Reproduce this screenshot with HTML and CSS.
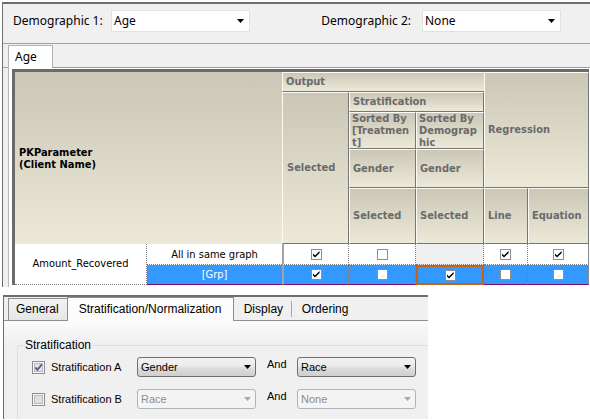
FILE: index.html
```html
<!DOCTYPE html>
<html>
<head>
<meta charset="utf-8">
<link rel="stylesheet" href="styles.css">
</head>
<body>
<div class="frame">
  <div class="toolbar">
    <span class="lbl lbl1">Demographic 1:</span>
    <div class="combo flat"><span class="ctext">Age</span><svg class="arrow" width="7" height="4" viewBox="0 0 7 4"><path d="M0 0H7L3.5 4Z" fill="#000"/></svg></div>
    <span class="lbl lbl2">Demographic 2:</span>
    <div class="combo flat"><span class="ctext">None</span><svg class="arrow" width="7" height="4" viewBox="0 0 7 4"><path d="M0 0H7L3.5 4Z" fill="#000"/></svg></div>
  </div>
  <div class="tabstrip"><div class="tab">Age</div></div>
  <div class="tabpage">
    <div class="grid">
      <div class="h pk">PKParameter<br>(Client Name)</div>
      <div class="h out">Output</div>
      <div class="h sel3">Selected</div>
      <div class="h strat">Stratification</div>
      <div class="h sort4">Sorted By<br>[Treatmen<br>t]</div>
      <div class="h sort5">Sorted By<br>Demograp<br>hic</div>
      <div class="h gen4">Gender</div>
      <div class="h gen5">Gender</div>
      <div class="h reg">Regression</div>
      <div class="h s4">Selected</div>
      <div class="h s5">Selected</div>
      <div class="h line">Line</div>
      <div class="h eq">Equation</div>

      <div class="d amount">Amount_Recovered</div>
      <div class="d r1 c2">All in same graph</div>
      <div class="d r1 c3"><svg class="cb" width="11" height="11" viewBox="0 0 11 11"><rect x=".5" y=".5" width="10" height="10" fill="#fff" stroke="#8e8e8e"/><path d="M2 4.6 4 6.6 8.6 2V4L4 8.6 2 6.6Z" fill="#000"/></svg></div>
      <div class="d r1"><svg class="cb" width="11" height="11" viewBox="0 0 11 11"><rect x=".5" y=".5" width="10" height="10" fill="#fff" stroke="#8e8e8e"/></svg></div>
      <div class="d r1 blank"></div>
      <div class="d r1"><svg class="cb" width="11" height="11" viewBox="0 0 11 11"><rect x=".5" y=".5" width="10" height="10" fill="#fff" stroke="#8e8e8e"/><path d="M2 4.6 4 6.6 8.6 2V4L4 8.6 2 6.6Z" fill="#000"/></svg></div>
      <div class="d r1 last"><svg class="cb" width="11" height="11" viewBox="0 0 11 11"><rect x=".5" y=".5" width="10" height="10" fill="#fff" stroke="#8e8e8e"/><path d="M2 4.6 4 6.6 8.6 2V4L4 8.6 2 6.6Z" fill="#000"/></svg></div>

      <div class="d r2 c2">[Grp]</div>
      <div class="d r2 c3"><svg class="cb" width="11" height="11" viewBox="0 0 11 11"><rect x=".5" y=".5" width="10" height="10" fill="#fff" stroke="#8e8e8e"/><path d="M2 4.6 4 6.6 8.6 2V4L4 8.6 2 6.6Z" fill="#000"/></svg></div>
      <div class="d r2"><svg class="cb" width="11" height="11" viewBox="0 0 11 11"><rect x=".5" y=".5" width="10" height="10" fill="#fff" stroke="#8e8e8e"/></svg></div>
      <div class="d r2 focus"><svg class="cb" width="11" height="11" viewBox="0 0 11 11"><rect x=".5" y=".5" width="10" height="10" fill="#fff" stroke="#8e8e8e"/><path d="M2 4.6 4 6.6 8.6 2V4L4 8.6 2 6.6Z" fill="#000"/></svg></div>
      <div class="d r2"><svg class="cb" width="11" height="11" viewBox="0 0 11 11"><rect x=".5" y=".5" width="10" height="10" fill="#fff" stroke="#8e8e8e"/></svg></div>
      <div class="d r2 last"><svg class="cb" width="11" height="11" viewBox="0 0 11 11"><rect x=".5" y=".5" width="10" height="10" fill="#fff" stroke="#8e8e8e"/></svg></div>
    </div>
  </div>
</div>

<div class="panel">
  <div class="ptabs">
    <div class="ptab boxed">General</div>
    <div class="ptab boxed active">Stratification/Normalization</div>
    <div class="ptab plain sep">Display</div>
    <div class="ptab plain">Ordering</div>
  </div>
  <div class="pbody">
    <fieldset class="group">
      <legend>Stratification</legend>
      <div class="srow">
        <svg class="wcb" width="13" height="13" viewBox="0 0 13 13"><rect x=".5" y=".5" width="12" height="12" fill="#f6f6f6" stroke="#8f8f8f"/><rect x="2.5" y="2.5" width="8" height="8" fill="#e2e4e8" stroke="#b9bcc2"/><path d="M3.4 6.4 5.4 8.8 9.8 3.4" fill="none" stroke="#4a5d8c" stroke-width="1.7"/></svg>
        <span class="slabel">Stratification A</span>
        <div class="combo win"><span class="ctext">Gender</span><svg class="arrow" width="7" height="4" viewBox="0 0 7 4"><path d="M0 0H7L3.5 4Z" fill="#000"/></svg></div>
        <span class="and">And</span>
        <div class="combo win"><span class="ctext">Race</span><svg class="arrow" width="7" height="4" viewBox="0 0 7 4"><path d="M0 0H7L3.5 4Z" fill="#000"/></svg></div>
      </div>
      <div class="srow">
        <svg class="wcb" width="13" height="13" viewBox="0 0 13 13"><rect x=".5" y=".5" width="12" height="12" fill="#f6f6f6" stroke="#8f8f8f"/><rect x="2.5" y="2.5" width="8" height="8" fill="#dfe0e2" stroke="#b9bcc2"/></svg>
        <span class="slabel">Stratification B</span>
        <div class="combo win disabled"><span class="ctext">Race</span><svg class="arrow" width="7" height="4" viewBox="0 0 7 4"><path d="M0 0H7L3.5 4Z" fill="#a8a8a8"/></svg></div>
        <span class="and">And</span>
        <div class="combo win disabled"><span class="ctext">None</span><svg class="arrow" width="7" height="4" viewBox="0 0 7 4"><path d="M0 0H7L3.5 4Z" fill="#a8a8a8"/></svg></div>
      </div>
    </fieldset>
  </div>
</div>
</body>
</html>
```

FILE: styles.css
```css
html, body {
  margin: 0;
  padding: 0;
}
body {
  width: 590px;
  height: 420px;
  overflow: hidden;
  background: #fff;
  font-family: "Noto Sans", "Liberation Sans", sans-serif;
  font-size: 12px;
  color: #000;
}

/* ---------- top frame ---------- */
.frame {
  margin: 2px 0 0 2px;
  border-top: 2px solid #6f6f6f;
  border-left: 1px solid #6f6f6f;
  background: #f0f0f0;
}
.toolbar {
  box-sizing: border-box;
  height: 40px;
  padding-top: 6px;
  border-bottom: 1px solid #a0a0a0;
  display: flex;
  align-items: flex-start;
}
.lbl {
  box-sizing: border-box;
  line-height: 22px;
  white-space: nowrap;
}
.lbl1 {
  width: 108px;
  padding-left: 10px;
}
.lbl2 {
  width: 172px;
  padding-right: 11px;
  text-align: right;
}
.combo {
  box-sizing: border-box;
  display: flex;
  align-items: center;
  justify-content: space-between;
}
.combo.flat {
  width: 139px;
  height: 22px;
  background: #fff;
  border: 1px solid #e1e1e1;
  padding: 0 5px 0 2px;
}
.combo.flat .ctext {
  line-height: 20px;
}
.tabstrip {
  height: 23px;
  border-bottom: 1px solid #a0a0a0;
  display: flex;
  align-items: flex-start;
}
.tab {
  box-sizing: border-box;
  margin: 1px 0 0 5px;
  width: 45px;
  height: 23px;
  padding-left: 6px;
  line-height: 21px;
  background: #fff;
  border: 1px solid #b2b2b2;
  border-bottom: none;
}
.tabpage {
  margin-left: 5px;
  border-left: 1px solid #b8b8b8;
  background: #fff;
  padding: 1px 0 2px 3px;
}

/* ---------- data grid ---------- */
.grid {
  display: grid;
  width: max-content;
  grid-template-columns: 132px 135px 67px 67px 68px 44px 61px;
  grid-template-rows: 20px 20px 37px 39px 56px 21px 20px;
  border-top: 3px solid #6b6b6b;
  border-left: 3px solid #6b6b6b;
  font-family: "DejaVu Sans Condensed", "DejaVu Sans", sans-serif;
  font-size: 11px;
}
.h {
  box-sizing: border-box;
  background: linear-gradient(#cbc7b6, #ece9d9);
  border-top: 1px solid #fbfaf4;
  border-left: 1px solid #fbfaf4;
  border-right: 1px solid #767676;
  border-bottom: 1px solid #767676;
  color: #6a6a6a;
  font-weight: bold;
  padding-left: 3px;
  display: flex;
  align-items: center;
  white-space: nowrap;
  overflow: hidden;
  line-height: 12px;
}
.pk {
  grid-column: 1 / 3;
  grid-row: 1 / 6;
  color: #000;
  border: none;
  padding-left: 4px;
  padding-top: 2px;
}
.out { grid-column: 3 / 8; grid-row: 1; }
.sel3 { grid-column: 3; grid-row: 2 / 6; padding-left: 4px; }
.strat { grid-column: 4 / 6; grid-row: 2; }
.sort4 { grid-column: 4; grid-row: 3; align-items: flex-start; padding-left: 2px; }
.sort5 { grid-column: 5; grid-row: 3; align-items: flex-start; padding-left: 2px; }
.gen4 { grid-column: 4; grid-row: 4; }
.gen5 { grid-column: 5; grid-row: 4; }
.reg { grid-column: 6 / 8; grid-row: 1 / 5; }
.s4 { grid-column: 4; grid-row: 5; }
.s5 { grid-column: 5; grid-row: 5; }
.line { grid-column: 6; grid-row: 5; }
.eq { grid-column: 7; grid-row: 5; }

.d {
  box-sizing: border-box;
  background: #fff;
  display: flex;
  align-items: center;
  justify-content: center;
  border-right: 1px dotted #7c7c7c;
  border-bottom: 1px dotted #7c7c7c;
  white-space: nowrap;
  color: #000;
}
.amount {
  grid-column: 1;
  grid-row: 6 / 8;
  padding-bottom: 1px;
}
.c2 { border-right: none; }
.c3 { border-left: 2px solid #a3a3a3; }
.last { border-right: 1px solid #8a8a8a; }
.blank { background: #f0f0f0; }
.r2 {
  background: #3399ff;
  color: #fff;
  border-bottom: 1px solid #7a0a78;
}
.r2.focus {
  border: 2px solid #c8620f;
  border-bottom: 2px solid #c8620f;
}
.cb { display: block; }

/* ---------- bottom panel ---------- */
.panel {
  box-sizing: border-box;
  margin: 8px 0 0 3px;
  width: 425px;
  height: 124px;
  overflow: hidden;
  border-top: 2px solid #6f6f6f;
  border-left: 1px solid #6f6f6f;
  background: #f0f0f0;
  font-family: "Liberation Sans", Arial, sans-serif;
}
.ptabs {
  height: 23px;
  border-bottom: 1px solid #8c8e94;
  display: flex;
  align-items: flex-start;
  padding-left: 4px;
  font-size: 12px;
}
.ptab {
  box-sizing: border-box;
  white-space: nowrap;
}
.ptab.boxed {
  margin-top: 1px;
  height: 22px;
  line-height: 21px;
  padding: 0 8px 0 7px;
  border: 1px solid #8c8e94;
  border-bottom: none;
  background: linear-gradient(#f3f3f3, #e6e6e6);
}
.ptab.active {
  margin: 0 0 0 -1px;
  height: 24px;
  line-height: 22px;
  width: 167px;
  padding-left: 11px;
  background: #fcfcfc;
}
.ptab.plain {
  margin-top: 4px;
  height: 16px;
  line-height: 16px;
  padding-left: 10px;
}
.ptab.sep {
  width: 58px;
  border-right: 1px solid #a7a7a7;
}
.pbody {
  padding: 16px 0 0 13px;
  background: linear-gradient(#fbfbfb, #f0f0f0 22px);
  height: 100px;
}
.group {
  margin: 0;
  width: 440px;
  padding: 4px 0 20px 5px;
  border: 1px solid #d5dfe5;
  border-radius: 3px;
}
.group legend {
  padding: 0 2px;
  line-height: 16px;
  font-size: 12px;
}
.srow {
  display: flex;
  align-items: center;
  height: 20px;
  margin-left: 9px;
  font-size: 11px;
}
.srow + .srow {
  margin-top: 12px;
}
.wcb {
  display: block;
  flex: none;
}
.slabel {
  width: 86px;
  margin-left: 6px;
  white-space: nowrap;
}
.combo.win {
  width: 119px;
  height: 20px;
  border: 1px solid #707070;
  border-radius: 3px;
  background: linear-gradient(#f2f2f2, #ebebeb 45%, #dddddd 55%, #cfcfcf);
  padding: 0 4px 0 3px;
}
.combo.win.disabled {
  border-color: #b0b4b8;
  background: #f4f4f4;
  color: #8d8d8d;
}
.and {
  align-self: flex-start;
  width: 30px;
  margin-left: 11px;
  line-height: 14px;
}
```
